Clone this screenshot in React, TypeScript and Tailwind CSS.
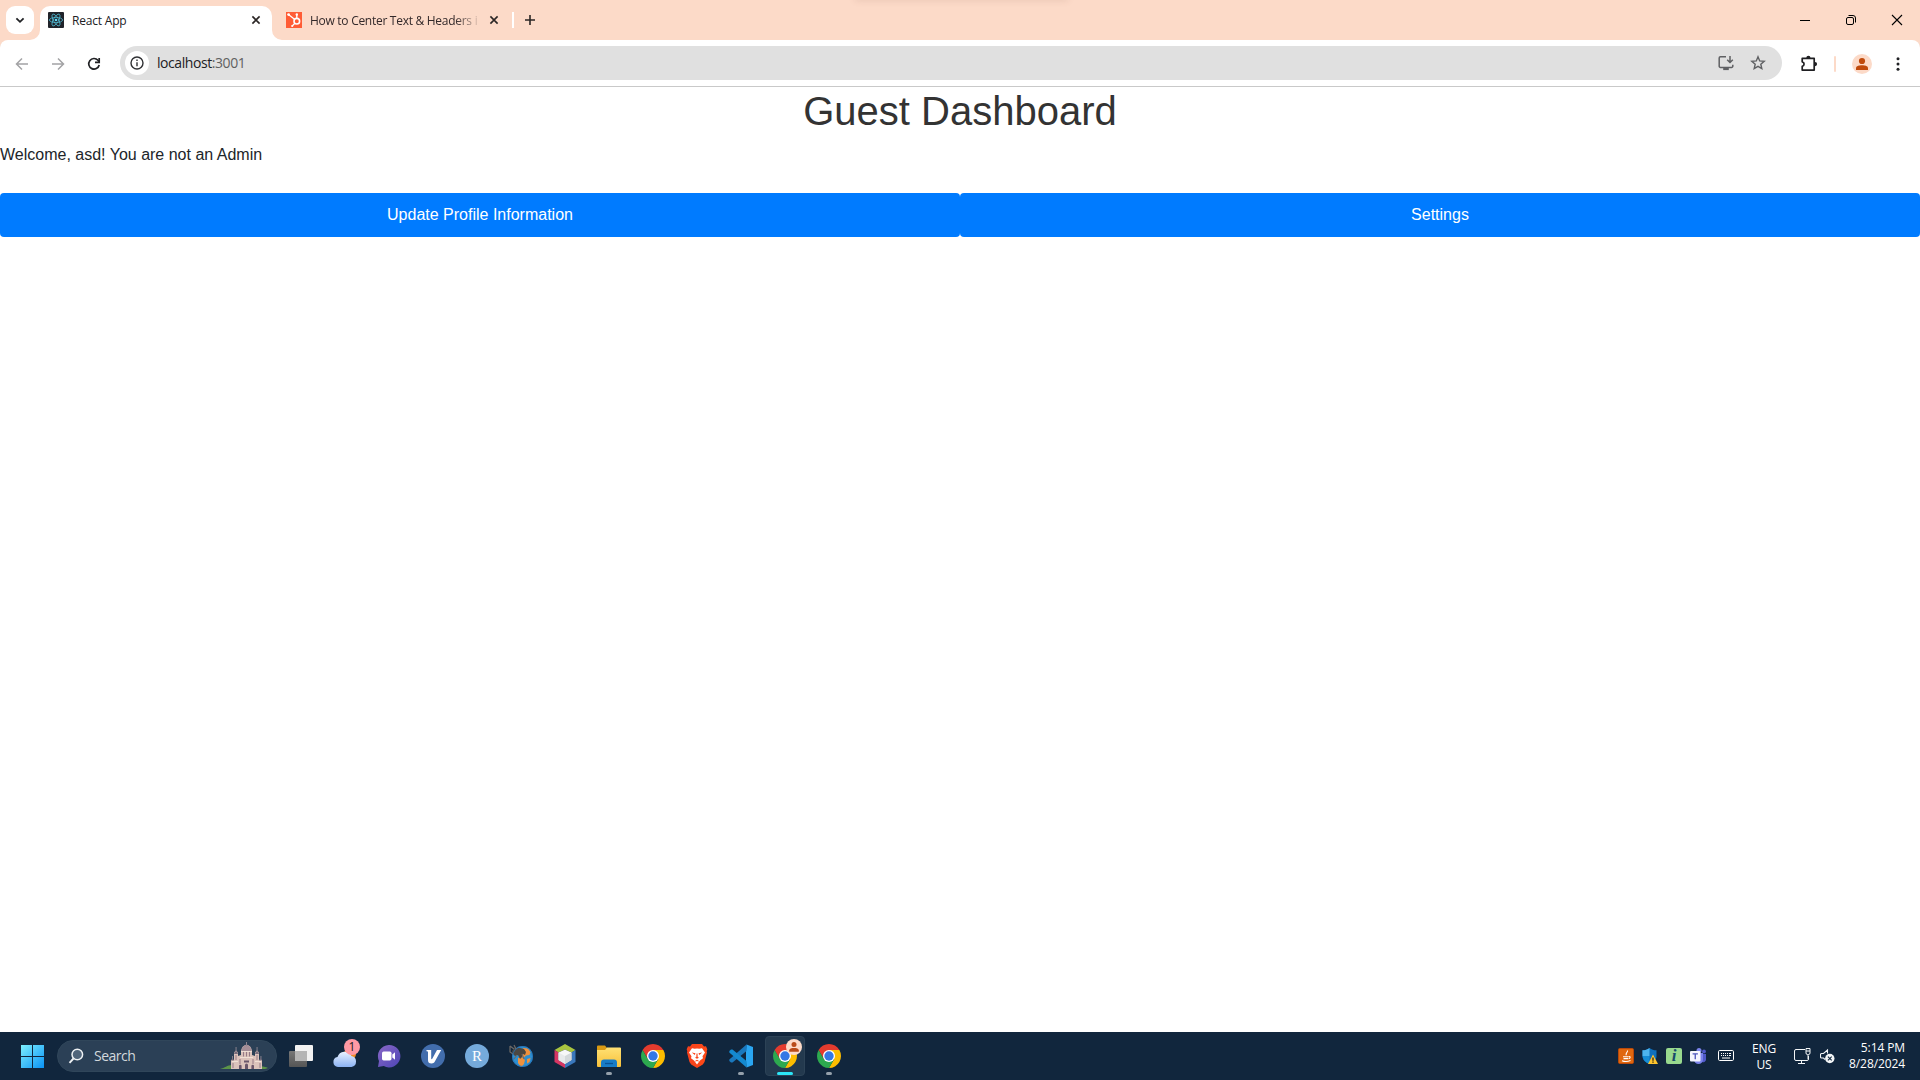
import type { ReactNode } from "react";

function CloseIcon() {
  return (
    <svg className="size-4 shrink-0" viewBox="0 0 16 16" fill="none" stroke="#2b2625" strokeWidth="1.6">
      <path d="M4.4 4.4l7.2 7.2M11.6 4.4l-7.2 7.2" />
    </svg>
  );
}

function ReactFavicon() {
  return (
    <svg className="size-4 shrink-0" viewBox="0 0 16 16" fill="none">
      <rect width="16" height="16" rx="1" fill="#20232a" />
      <g stroke="#4fb8d0" strokeWidth="0.8">
        <ellipse cx="8" cy="8" rx="6.6" ry="2.6" />
        <ellipse cx="8" cy="8" rx="6.6" ry="2.6" transform="rotate(60 8 8)" />
        <ellipse cx="8" cy="8" rx="6.6" ry="2.6" transform="rotate(120 8 8)" />
      </g>
      <circle cx="8" cy="8" r="1.3" fill="#61dafb" />
    </svg>
  );
}

function HubspotFavicon() {
  return (
    <svg className="size-4 shrink-0" viewBox="0 0 16 16" fill="none">
      <rect width="16" height="16" fill="#ff5c35" />
      <circle cx="10.8" cy="9.2" r="2.8" stroke="#fff" strokeWidth="1.6" />
      <path d="M10.8 6V3M8.8 7.4L2.8 2.8M8.8 11.4l-2.4 2.4" stroke="#fff" strokeWidth="1.3" />
      <circle cx="2.6" cy="2.6" r="1.4" fill="#fff" />
      <circle cx="10.8" cy="2.5" r="1.2" fill="#fff" />
      <circle cx="6.2" cy="14" r="1.1" fill="#fff" />
    </svg>
  );
}

function TabStrip() {
  return (
    <div className="relative flex h-10 bg-[#fcdac8]">
      <div className="absolute -top-1 left-[855px] h-1 w-[213px] shadow-[0_0_7px_0_rgba(120,80,70,0.2)]" />
      <div className="ml-1.5 mt-1.5 flex size-7 items-center justify-center rounded-[9px] bg-white">
        <svg className="size-4" viewBox="0 0 16 16" fill="none" stroke="#202124" strokeWidth="1.8">
          <path d="M4.4 6.3L8 9.8l3.6-3.5" />
        </svg>
      </div>
      <div className="relative ml-1.5 mt-1.5 flex h-[34px] w-[232px] items-center rounded-t-[10px] bg-white pb-1.5 pl-2 pr-2">
        <svg className="absolute -left-2.5 bottom-0 size-2.5" viewBox="0 0 10 10">
          <path d="M10 0v10H0A10 10 0 0 0 10 0z" fill="#fff" />
        </svg>
        <svg className="absolute -right-2.5 bottom-0 size-2.5" viewBox="0 0 10 10">
          <path d="M0 0v10h10A10 10 0 0 1 0 0z" fill="#fff" />
        </svg>
        <ReactFavicon />
        <span className="ml-2 flex-1 whitespace-nowrap pt-0.5 text-[12px] leading-4 tracking-[-0.2px] text-[#202124]">
          React App
        </span>
        <CloseIcon />
      </div>
      <div className="ml-3.5 flex h-10 items-center">
        <HubspotFavicon />
        <div className="ml-2 w-[168px] whitespace-nowrap pt-0.5 text-[12px] leading-4 tracking-[-0.28px] text-[#33292a] [mask-image:linear-gradient(to_right,#000_145px,transparent_172px)]">
          How to Center Text &amp; Headers i
        </div>
        <div className="ml-2 flex">
          <CloseIcon />
        </div>
        <div className="ml-2.5 h-4 w-0.5 bg-white" />
        <svg className="ml-2 size-4" viewBox="0 0 16 16" stroke="#2b2625" strokeWidth="1.6">
          <path d="M8 3v10M3 8h10" />
        </svg>
      </div>
      <div className="ml-auto flex h-10 items-center gap-[30px] pr-[15px]">
        <svg className="size-4" viewBox="0 0 16 16" stroke="#000" strokeWidth="1">
          <path d="M3 8.5h10" />
        </svg>
        <svg className="size-4" viewBox="0 0 16 16" fill="none" stroke="#000" strokeWidth="1">
          <rect x="3.5" y="5.5" width="7" height="7" rx="1.5" />
          <path d="M5.5 3.5H10a2.5 2.5 0 0 1 2.5 2.5v4.5" />
        </svg>
        <svg className="size-4" viewBox="0 0 16 16" stroke="#000" strokeWidth="1.1">
          <path d="M3 3l10 10M13 3L3 13" />
        </svg>
      </div>
    </div>
  );
}

function Toolbar() {
  return (
    <div className="bg-[#fcdac8]">
      <div className="flex h-[47px] items-center rounded-t-[8px] bg-white shadow-[inset_0_-1px_0_#c9c9c9]">
        <div className="ml-3.5 flex gap-5">
          <svg className="size-4" viewBox="0 0 16 16" fill="none" stroke="#a3a3a5" strokeWidth="1.5">
            <path d="M14 8H3M8 2.5L2.5 8 8 13.5" />
          </svg>
          <svg className="size-4" viewBox="0 0 16 16" fill="none" stroke="#a3a3a5" strokeWidth="1.5">
            <path d="M2 8h11M8 2.5L13.5 8 8 13.5" />
          </svg>
          <svg className="size-4" viewBox="0 0 16 16" fill="none" stroke="#202124" strokeWidth="1.7">
            <path d="M13.2 9A5.3 5.3 0 1 1 12 4.3L13.200 5.500" />
            <path d="M13.2 2v4.3H9" />
          </svg>
        </div>
        <div className="mb-px ml-[18px] flex h-[34px] w-[1662px] items-center rounded-full bg-[#e0e0e0]">
          <div className="ml-[5px] flex size-6 items-center justify-center rounded-full bg-white">
            <svg className="size-4" viewBox="0 0 16 16" fill="none" stroke="#303134" strokeWidth="1.4">
              <circle cx="8" cy="8" r="6" />
              <path d="M8 7.2v4M8 4.6v1.5" />
            </svg>
          </div>
          <span className="ml-2 text-[14px] leading-5 tracking-[-0.43px] text-[#202124]">
            localhost<span className="text-[#606060]">:3001</span>
          </span>
          <svg className="ml-auto size-4" viewBox="0 0 16 16" fill="none" stroke="#5f6063" strokeWidth="1.5">
            <path d="M8 1.8H2.4a1.2 1.2 0 0 0-1.2 1.2v8.2a1.2 1.2 0 0 0 1.2 1.2h11.2a1.2 1.2 0 0 0 1.2-1.2V9.8" />
            <path d="M12 1v6.2M9.2 4.8L12 7.5l2.8-2.7" />
            <path d="M5.2 14h5.6" strokeWidth="2.2" />
          </svg>
          <svg className="ml-4 mr-4 size-4" viewBox="0 0 16 16" fill="none" stroke="#5f6063" strokeWidth="1.4">
            <path d="M8 1.800l1.700 4.100 4.500.4-3.400 2.900 1 4.400L8 11.300l-3.800 2.300 1-4.400-3.400-2.900 4.500-.4z" />
          </svg>
        </div>
        <svg className="ml-[18px] h-[18px] w-[18px]" viewBox="0 0 18 18">
          <path
            d="M2.2 3.400h12v11.700H2.200v-3.700c2.500-.4 2.500-4.200 0-4.600z"
            fill="none"
            stroke="#1f1f22"
            strokeWidth="1.7"
            strokeLinejoin="round"
          />
          <path d="M6.3 2.900a2.1 2.1 0 0 1 4.2 0zM15 7a2.1 2.1 0 0 1 0 4.2z" fill="#1f1f22" />
        </svg>
        <div className="ml-4 h-4 w-0.5 rounded-full bg-[#fcdac8]" />
        <svg className="ml-4 size-5" viewBox="0 0 20 20">
          <circle cx="10" cy="10" r="10" fill="#fcdac8" />
          <circle cx="10" cy="7" r="3.1" fill="#c04a0c" />
          <path d="M4 16v-1.8C4 12 7 11.200 10 11.200s6 .8 6 3V16z" fill="#c04a0c" />
        </svg>
        <svg className="ml-[18px] size-4" viewBox="0 0 16 16" fill="#202124">
          <circle cx="8" cy="2.800" r="1.5" />
          <circle cx="8" cy="8" r="1.5" />
          <circle cx="8" cy="13.200" r="1.5" />
        </svg>
      </div>
    </div>
  );
}

function ActionButton({ children }: { children: ReactNode }) {
  return (
    <button className="h-11 flex-1 rounded-[4px] bg-[#007bff] text-center text-[16px] leading-6 text-white">
      {children}
    </button>
  );
}

function Dashboard() {
  return (
    <main className="flex-1 bg-white font-['Liberation_Sans',Arial,sans-serif]">
      <h1 className="mb-2 text-center text-[40px] font-normal leading-[48px] text-[#333]">Guest Dashboard</h1>
      <p className="text-[16px] leading-6 text-[#212529]">Welcome, asd! You are not an Admin</p>
      <div className="mt-[26px] flex">
        <ActionButton>Update Profile Information</ActionButton>
        <ActionButton>Settings</ActionButton>
      </div>
    </main>
  );
}

function Slot({ children, mark, active }: { children: ReactNode; mark?: boolean; active?: boolean }) {
  return (
    <div className="relative flex h-12 w-11 items-center justify-center">
      {active && <div className="absolute inset-x-0.5 inset-y-1 rounded-[4px] border border-[#2c4256] bg-[#23394e]" />}
      <div className="relative size-6">{children}</div>
      {mark && <div className="absolute bottom-[5px] h-[3px] w-1.5 rounded-full bg-[#95a0ab]" />}
      {active && <div className="absolute bottom-[5px] h-[3px] w-4 rounded-full bg-[#2ce6f8]" />}
    </div>
  );
}

function ChromeLogo() {
  return (
    <svg className="size-6" viewBox="0 0 24 24">
      <path d="M22.390 6A12 12 0 0 1 12 24l5.200-9L12 6z" fill="#fdbd00" />
      <path d="M1.610 6L6.800 15 12 12V6h10.390A12 12 0 0 0 1.610 6z" fill="#e33b2e" />
      <path d="M1.610 6l5.200 9L12 17.500l5.200-2.500L12 24A12 12 0 0 1 1.610 6z" fill="#2da94f" />
      <circle cx="12" cy="12" r="6" fill="#fff" />
      <circle cx="12" cy="12" r="4.700" fill="#3478e5" />
    </svg>
  );
}

function Castle() {
  return (
    <svg className="h-7 w-12" viewBox="0 0 48 28">
      <path d="M0 27c5-1 7-4 12-4l26 1c5 0 8 1 10 2l-3 1z" fill="#5c9448" />
      <path d="M11 27V18h3v-7q2-5 4 0v3l3-1V9q1-6 5.500-6T32 9v4l3 1v-3q2-5 4 0v7h3v9z" fill="#dcc3bb" />
      <path d="M21.500 9q.5-5.500 5-6.500 4.500 1 5 6.500z" fill="#a58e97" />
      <path d="M26 0h1v4h-1zM15.600 5h.9v4h-.9zM36.600 5h.9v4h-.9zM12 14h.9v4H12zM40.500 14h.9v4h-.9z" fill="#8f8591" />
      <path d="M14 12q2-6 4 0zM35 12q2-6 4 0zM11 18.500q1.500-4 3 0zM39 18.500q1.500-4 3 0z" fill="#776b7a" />
      <path d="M23.500 9.500v5M26.500 9.500v5M29.500 9.500v5M16 13v5M37 13v5M20 17v5M33 17v5M13 21v5M40 21v5" stroke="#967a86" strokeWidth="1" />
      <path d="M20 15.500h13M12 19.500h6M35 19.500h6M21 9.500h11" stroke="#f3e3d8" strokeWidth=".9" />
      <path d="M19 27v-3a1.300 1.300 0 0 1 2.600 0v3zM25 27v-4a1.500 1.500 0 0 1 3 0v4zM31.400 27v-3a1.300 1.300 0 0 1 2.600 0v3zM24 20.500v-2h5v2z" fill="#6b566a" />
    </svg>
  );
}

function TaskbarApps() {
  return (
    <div className="ml-[2px] flex">
      <Slot>
        <svg className="size-6" viewBox="0 0 24 24">
          <defs>
            <linearGradient id="desk-back" x2="0" y2="1">
              <stop stopColor="#777" />
              <stop offset="1" stopColor="#555" />
            </linearGradient>
          </defs>
          <rect x="6" y="1" width="18" height="16" rx="1" fill="#f2f2f2" />
          <rect y="7" width="18" height="16" rx="1" fill="url(#desk-back)" />
          <path d="M6 7h12v10H6z" fill="#b5b5b5" />
        </svg>
      </Slot>
      <Slot>
        <svg className="size-6" viewBox="0 0 24 24">
          <defs>
            <linearGradient id="cloud" x2="0" y2="1">
              <stop stopColor="#e9f2ff" />
              <stop offset="1" stopColor="#8bb2f3" />
            </linearGradient>
          </defs>
          <circle cx="17" cy="10" r="6" fill="#f08c22" />
          <path d="M5 23a5 5 0 0 1-.5-9.900 7.500 7.500 0 0 1 14-1.100A5.600 5.600 0 0 1 18.500 23z" fill="url(#cloud)" />
        </svg>
        <div className="absolute -top-[5px] left-[11px] flex size-4 items-center justify-center rounded-full bg-[#ff99a4] text-[12px] leading-none text-[#1c1c1c]">
          1
        </div>
      </Slot>
      <Slot>
        <svg className="size-6" viewBox="0 0 24 24">
          <defs>
            <linearGradient id="chat" x2="1" y2="1">
              <stop stopColor="#8a68c8" />
              <stop offset="1" stopColor="#4d45b5" />
            </linearGradient>
          </defs>
          <path d="M11.800 1a11.200 11.200 0 1 1-5 21L1 23l1-6A11.200 11.200 0 0 1 11.800 1z" fill="url(#chat)" />
          <rect x="5" y="7.500" width="9.500" height="9" rx="1.700" fill="#fff" />
          <path d="M15.300 10.500L18 8.200v7.600l-2.700-2.300z" fill="#fff" />
        </svg>
      </Slot>
      <Slot>
        <svg className="size-6" viewBox="0 0 24 24">
          <circle cx="12" cy="12" r="12" fill="#426dac" />
          <path d="M5.500 6h4.700v8.500c0 1 .7 1 1.200.1L16 6h4.200l-6.500 11.800c-.7 1.200-1.500 1.700-3 1.700C8 19.500 7 18.500 7 16V8.500c0-1-.5-1.200-1.500-1.200z" fill="#fff" />
        </svg>
      </Slot>
      <Slot>
        <div className="flex size-6 items-center justify-center rounded-full bg-[#75aadb] font-['Liberation_Serif',serif] text-[15px] leading-6 text-white">
          R
        </div>
      </Slot>
      <Slot>
        <svg className="size-6" viewBox="0 0 24 24">
          <circle cx="13.500" cy="12.500" r="10.500" fill="#2f8fd0" />
          <path d="M14 4l5 .5 2.500 3.500-1 3-3.500.5-2 2-3-1zM9 14l4-1 3 3-1 4-3 3-3-4zM18 15l3.500-1-1 4-2.500 1.500z" fill="#f0913c" />
          <path d="M3 7l3-3.500 5 .5 4 1 2 3-1 3-2-1-1 3-2 2-2-4-3 1-2-2z" fill="#4b4742" />
          <path d="M1 2v6l3 2M1 2l4 3M5 1l2 4M8 11l-3 4M13 10l2 5" stroke="#6f6a66" strokeWidth="1.200" fill="none" />
          <circle cx="13.500" cy="12.500" r="10" fill="none" stroke="#2472b8" strokeWidth=".9" />
        </svg>
      </Slot>
      <Slot>
        <svg className="size-6" viewBox="0 0 24 24">
          <path d="M12 0l10.500 6-4 2.500-6.500-3-6.500 3-4-2.500z" fill="#a9c43f" />
          <path d="M1.500 6l4 2.500V16l6.500 4v4L1.500 18z" fill="#d63663" />
          <path d="M22.500 6l-4 2.500V16L12 20v4l10.500-6z" fill="#3a78bd" />
          <path d="M12 5.500l6.500 3V16L12 20l-6.500-4V8.500z" fill="#f7f8f8" />
          <path d="M12 12l6.500-3.500V16L12 20z" fill="#d4d9dc" />
          <path d="M5.500 8.500L12 12v8l-6.500-4z" fill="#e8ebec" />
        </svg>
      </Slot>
      <Slot mark>
        <svg className="size-6" viewBox="0 0 24 24">
          <defs>
            <linearGradient id="folder" x2="0" y2="1">
              <stop stopColor="#ffe174" />
              <stop offset="1" stopColor="#f7c03a" />
            </linearGradient>
          </defs>
          <path d="M0 2.500a1 1 0 0 1 1-1h7l2 2.500h3v4H0z" fill="#d99a13" />
          <path d="M0 6h8l2-2.500h13a1 1 0 0 1 1 1V22a1 1 0 0 1-1 1H1a1 1 0 0 1-1-1z" fill="url(#folder)" />
          <path d="M4 23v-4.500a3 3 0 0 1 3-3h10a3 3 0 0 1 3 3V23z" fill="#187cc7" />
          <path d="M8 19.500h8" stroke="#0a5396" strokeWidth="1.300" />
        </svg>
      </Slot>
      <Slot>
        <ChromeLogo />
      </Slot>
      <Slot>
        <svg className="size-6" viewBox="0 0 24 24">
          <defs>
            <linearGradient id="lion" x2="1">
              <stop stopColor="#f6401c" />
              <stop offset="1" stopColor="#ff4a16" />
            </linearGradient>
          </defs>
          <path d="M7 0h10l2 2.500 2-.2 1.300 3-.6 2 .3 1.200L19.500 18l-1.700 2.500L12 24l-5.800-3.500L4.500 18 2 8.500l.3-1.200-.6-2L3 2.300l2 .2z" fill="url(#lion)" />
          <path d="M7 4.200l2.700.6L12 4.400l2.300.4 2.700-.6 3 4.300-2.500 3.800.5 2-3 2.200L12 20.500l-3-4-3-2.200.5-2L4 8.500z" fill="#fff" />
          <path d="M6.800 8.500l3.700.8-.7 1.700zM17.200 8.500l-3.700.8.7 1.700zM11.500 9.500h1l.2 3.500 1.300.8-2 1-2-1 1.300-.8zM10 17l2-1.200 2 1.200-.5.600L12 16.900l-1.500.7z" fill="#f9471d" />
        </svg>
      </Slot>
      <Slot mark>
        <svg className="size-6" viewBox="0 0 24 24">
          <path d="M17.500.5L24 3v18l-6.500 2.500L17 17V7z" fill="#2aa6f2" />
          <path d="M17.500.500V7L3.500 18.500 2 18.600.3 17v-1.500z" fill="#1a78be" />
          <path d="M17.500 23.500V17L3.500 5.500 2 5.400.3 7v1.500z" fill="#1489d0" />
        </svg>
      </Slot>
      <Slot active>
        <ChromeLogo />
        <svg className="absolute -right-[5px] -top-[5px] size-4" viewBox="0 0 16 16">
          <circle cx="8" cy="8" r="8" fill="#fcdac8" />
          <circle cx="8" cy="5.500" r="2.500" fill="#b94b19" />
          <path d="M3.200 12.700v-1.500C3.200 9.500 5.600 9 8 9s4.800.5 4.800 2.200v1.500z" fill="#b94b19" />
        </svg>
      </Slot>
      <Slot mark>
        <ChromeLogo />
      </Slot>
    </div>
  );
}

function SystemTray() {
  return (
    <div className="ml-auto flex h-12 items-center text-white">
      <div className="flex gap-2">
        <svg className="size-4" viewBox="0 0 16 16" fill="none">
          <rect x=".5" y=".5" width="15" height="15" rx="1.200" fill="#e0670f" stroke="#b8480a" />
          <path d="M9.500 2.500C10 4.500 7 5 8.300 7.300M5 8.800h5.500M5.500 10.600h4.500M10.800 8.500c2-.3 1.600 2-.3 2.200M4 12.700c2 .9 6 .9 8.500-.2" stroke="#fff" strokeWidth="1.100" />
        </svg>
        <svg className="size-4" viewBox="0 0 16 16">
          <path d="M7.500 0c2 1.700 4.500 2.300 7 2.300V8c0 4-3 6.500-7 8C3.500 14.500.5 12 .5 8V2.300C3 2.300 5.500 1.700 7.500 0z" fill="#0f70bd" />
          <path d="M7.500 0v8H.5V2.300C3 2.300 5.500 1.700 7.500 0z" fill="#4db5ee" />
          <path d="M7.500 8v8c-4-1.500-6.500-4-7-8z" fill="#168dd5" />
          <path d="M11 6.500l5 9.500H6z" fill="#ffc52e" />
          <path d="M11 9.500v3.200M11 13.500v1.300" stroke="#30240a" strokeWidth="1.300" />
        </svg>
        <div className="flex size-4 items-center justify-center rounded-[2px] bg-[#98d98e] font-['Liberation_Serif',serif] text-[17px] font-bold italic leading-4 text-[#174a6b]">
          i
        </div>
        <svg className="size-4" viewBox="0 0 16 16">
          <circle cx="9" cy="2.500" r="2.500" fill="#7b83eb" />
          <circle cx="14" cy="3.500" r="1.900" fill="#5059c9" />
          <path d="M11 6h5v6a3 3 0 0 1-4 2z" fill="#5059c9" />
          <path d="M4 5h9v6.500a4.500 4.500 0 0 1-9 0z" fill="#7b83eb" />
          <rect y="3" width="10.500" height="10.500" rx="1" fill="#f4f4ff" />
          <path d="M2.600 5.800h5.300M5.250 5.800v5.400" stroke="#4b53bc" strokeWidth="1.300" />
        </svg>
      </div>
      <svg className="ml-3 size-4" viewBox="0 0 16 16" fill="none" stroke="#fff" strokeWidth="1">
        <rect x=".5" y="2.500" width="15" height="10" rx="1.200" />
        <path d="M3 5.500h1M5 5.500h1M7 5.500h1M9 5.500h1M11 5.500h2M3 7.500h1M5 7.500h1M7 7.500h1M9 7.500h1M11 7.500h2M4 10h8" strokeWidth="1.100" />
      </svg>
      <div className="ml-[6px] flex w-12 flex-col pt-0.5 text-center text-[12px] leading-4 tracking-[-0.2px]">
        <span>ENG</span>
        <span>US</span>
      </div>
      <svg className="ml-[6px] h-[18px] w-[17px]" viewBox="0 0 17 18" fill="none" stroke="#f3f5f7" strokeWidth="1">
        <path d="M11 2.500H2A1.500 1.500 0 0 0 .5 4v8A1.500 1.500 0 0 0 2 13.500h11a1.500 1.500 0 0 0 1.500-1.500V9M7.500 13.500V16M4 16.500h7" />
        <path d="M12 1.500h4V6a1.500 1.500 0 0 1-1.500 1.500h-1A1.500 1.500 0 0 1 12 6zM12 4h4M14 7.500V12" />
      </svg>
      <svg className="ml-[9px] size-4" viewBox="0 0 16 16" fill="none">
        <path d="M5 11.500L3.500 10H1.500a1 1 0 0 1-1-1V6.500a1 1 0 0 1 1-1h2L7.500 2v3.500" stroke="#f3f5f7" strokeWidth="1.100" />
        <circle cx="9.800" cy="10.500" r="4.700" fill="#f3f5f7" />
        <path d="M7.900 8.600l3.800 3.800M11.700 8.600l-3.800 3.800" stroke="#12273d" strokeWidth="1.100" />
      </svg>
      <div className="mr-[15px] flex w-[69px] flex-col text-right text-[12px] leading-4 tracking-[-0.1px]">
        <span>5:14 PM</span>
        <span>8/28/2024</span>
      </div>
    </div>
  );
}

function Taskbar() {
  return (
    <footer className="flex h-12 shrink-0 items-center bg-[#11263d]">
      <svg className="ml-[21px] h-[23px] w-[23px]" viewBox="0 0 23 23">
        <defs>
          <linearGradient id="start" x2="1" y2="1">
            <stop stopColor="#7df0ff" />
            <stop offset="1" stopColor="#0a92f5" />
          </linearGradient>
        </defs>
        <path d="M0 0h11v11H0zM12 0h11v11H12zM0 12h11v11H0zM12 12h11v11H12z" fill="url(#start)" />
      </svg>
      <div className="ml-[13px] flex h-8 w-[220px] items-center rounded-full border border-[#30465a] bg-[#2b4056]">
        <svg className="ml-[10px] size-4" viewBox="0 0 16 16" fill="none" stroke="#eef1f3" strokeWidth="1.500">
          <circle cx="9.300" cy="6.500" r="5.300" fill="#50657a" />
          <path d="M5.500 10.500L1.500 14.800" strokeWidth="1.900" />
        </svg>
        <span className="ml-[10px] text-[14px] leading-5 tracking-[-0.5px] text-[#d2d8dd]">Search</span>
        <div className="ml-auto mr-[8px]">
          <Castle />
        </div>
      </div>
      <TaskbarApps />
      <SystemTray />
    </footer>
  );
}

export default function App() {
  return (
    <div className="flex h-screen w-full flex-col overflow-hidden bg-white font-['Open_Sans','Noto_Sans',sans-serif]">
      <TabStrip />
      <Toolbar />
      <Dashboard />
      <Taskbar />
    </div>
  );
}
